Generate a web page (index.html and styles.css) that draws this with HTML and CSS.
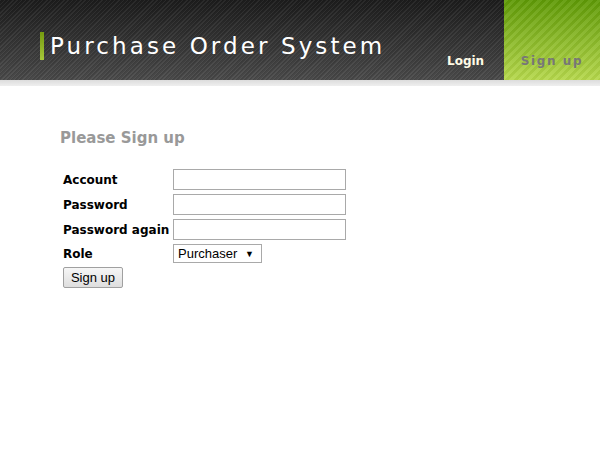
FILE: index.html
```html
<!DOCTYPE html>
<html>
<head>
<meta charset="utf-8">
<link rel="stylesheet" href="styles.css">
</head>
<body>
<header class="header">
  <div class="brand"><span class="brand-bar"></span><h1 class="brand-title">Purchase Order System</h1></div>
  <nav class="nav">
    <a class="nav-item" href="#">Login</a>
    <a class="nav-item nav-active" href="#">Sign up</a>
  </nav>
</header>
<div class="divider"></div>
<main class="content">
  <h2 class="heading">Please Sign up</h2>
  <form class="form">
    <div class="row"><label class="label">Account</label><input class="field" type="text"></div>
    <div class="row"><label class="label">Password</label><input class="field" type="password"></div>
    <div class="row"><label class="label">Password again</label><input class="field" type="password"></div>
    <div class="row row-short"><label class="label">Role</label><div class="select"><span>Purchaser</span><span class="arrow">▼</span></div></div>
    <div class="row"><button class="btn" type="button">Sign up</button></div>
  </form>
</main>
</body>
</html>
```
FILE: styles.css
```css
* { box-sizing: border-box; }
html, body { margin: 0; padding: 0; background: #fff; }
body { font-family: "DejaVu Sans", Verdana, sans-serif; }
.header {
  height: 80px;
  display: flex;
  justify-content: space-between;
  background:
    repeating-linear-gradient(135deg, rgba(255,255,255,0.06) 0 1px, rgba(0,0,0,0.08) 1px 2px, rgba(255,255,255,0) 2px 3px),
    linear-gradient(#1c1c1c, #4a4a4a);
}
.brand { display: flex; align-items: center; padding: 32px 0 0 40px; height: 60px; }
.brand-bar { width: 4px; height: 28px; background: linear-gradient(#769c10, #a6c73a); margin-right: 6px; }
.brand-title {
  margin: 0;
  color: #fff;
  font-weight: normal;
  font-size: 23px;
  letter-spacing: 3.1px;
  line-height: 28px;
  white-space: nowrap;
}
.nav { display: flex; height: 80px; }
.nav-item {
  display: flex;
  align-items: flex-end;
  padding-bottom: 12px;
  justify-content: center;
  text-decoration: none;
  font-weight: bold;
  font-size: 12px;
  color: #fffbe6;
}
.nav-item:first-child { width: 67px; padding-left: 10px; justify-content: flex-start; }
.nav-active {
  width: 96px;
  color: #777;
  letter-spacing: 1.6px;
  background:
    repeating-linear-gradient(135deg, rgba(255,255,255,0.07) 0 3px, rgba(0,0,0,0.04) 3px 6px),
    linear-gradient(#5f9a06, #b6d84c);
}
.divider { height: 6px; background: linear-gradient(#dcdcdc, #efefef); }
.content { padding: 43px 0 0 60px; }
.heading { margin: 0 0 22px 0; font-size: 15px; color: #999; font-weight: bold; }
.form { padding-left: 3px; display: flex; flex-direction: column; gap: 4px; }
.row { display: flex; align-items: center; height: 21px; }
.row-short { height: 19px; }
.label { width: 110px; font-size: 12px; font-weight: bold; color: #000; white-space: nowrap; }
.field {
  width: 173px; height: 21px; margin: 0;
  border: 1px solid #a9a9a9; background: #fff;
}
.select {
  width: 89px; height: 19px;
  border: 1px solid #a9a9a9;
  display: flex; align-items: center; justify-content: space-between;
  padding: 0 7px 0 4px;
  font-family: "Liberation Sans", Arial, sans-serif; font-size: 13px; color: #000;
}
.arrow { font-size: 9px; }
.btn {
  width: 60px; height: 21px; padding: 0;
  font-family: "Liberation Sans", Arial, sans-serif; font-size: 13px; color: #000;
  border: 1px solid #a0a0a0; border-radius: 2px;
  background: linear-gradient(#f6f6f6, #dedede);
}
```
